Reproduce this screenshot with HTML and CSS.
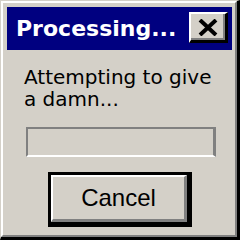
FILE: index.html
```html
<!DOCTYPE html>
<html>
<head>
<meta charset="utf-8">
<link rel="stylesheet" href="styles.css">
</head>
<body>
<div class="win">
  <div class="frame">
    <div class="titlebar">
      <span class="title">Processing...</span>
      <button class="close" aria-label="Close">
        <svg width="20" height="17" viewBox="0 0 20 17">
          <path d="M2 1 L18 16 M18 1 L2 16" stroke="#000" stroke-width="4" fill="none"/>
        </svg>
      </button>
    </div>
    <div class="content">
      <p class="msg">Attempting to give<br>a damn...</p>
      <div class="progress"></div>
      <button class="cancel"><span class="face">Cancel</span></button>
    </div>
  </div>
</div>
</body>
</html>
```
FILE: styles.css
```css
html, body {
  margin: 0;
  padding: 0;
  background: #d4d0c8;
}
.win {
  width: 240px;
  height: 240px;
  box-sizing: border-box;
  background: #d4d0c8;
  border-top: 1px solid #d4d0c8;
  border-left: 1px solid #d4d0c8;
  border-right: 3px solid #000;
  border-bottom: 3px solid #000;
}
.frame {
  height: 100%;
  box-sizing: border-box;
  border-top: 2px solid #fff;
  border-left: 2px solid #fff;
  border-right: 2px solid #808080;
  border-bottom: 2px solid #808080;
  padding: 4px 3px 0 4px;
}
.titlebar {
  height: 43px;
  background: #000080;
  display: flex;
  align-items: flex-start;
  padding-left: 9px;
  box-sizing: border-box;
}
.title {
  font-family: "DejaVu Sans", sans-serif;
  font-weight: bold;
  font-size: 22px;
  line-height: 26px;
  color: #fff;
  margin-top: 9px;
  white-space: nowrap;
}
.close {
  margin: 5px 4px 0 auto;
  width: 39px;
  height: 31px;
  box-sizing: border-box;
  padding: 0;
  background: #d4d0c8;
  border-top: 2px solid #fff;
  border-left: 2px solid #fff;
  border-right: 3px solid #000;
  border-bottom: 3px solid #000;
  box-shadow: inset -2px -2px 0 #808080;
  display: flex;
  align-items: center;
  justify-content: center;
}
.close svg {
  display: block;
  margin-top: 1px;
}
.content {
  padding-top: 16px;
}
.msg {
  margin: 0 0 0 17px;
  font-family: "DejaVu Sans", sans-serif;
  font-size: 20px;
  line-height: 22px;
  color: #000;
}
.progress {
  margin: 17px 0 0 19px;
  width: 190px;
  height: 30px;
  box-sizing: border-box;
  border-top: 2px solid #808080;
  border-left: 2px solid #808080;
  border-right: 3px solid #808080;
  border-bottom: 2px solid #fff;
}
.cancel {
  display: block;
  margin: 15px 0 0 41px;
  width: 144px;
  height: 55px;
  box-sizing: border-box;
  padding: 0;
  background: #d4d0c8;
  border-top: 3px solid #000;
  border-left: 3px solid #000;
  border-right: 5px solid #000;
  border-bottom: 5px solid #000;
}
.face {
  display: flex;
  align-items: center;
  justify-content: center;
  height: 100%;
  box-sizing: border-box;
  border-top: 2px solid #fff;
  border-left: 2px solid #fff;
  border-right: 3px solid #808080;
  border-bottom: 3px solid #808080;
  font-family: "Liberation Sans", sans-serif;
  font-size: 24px;
  color: #000;
}
```
